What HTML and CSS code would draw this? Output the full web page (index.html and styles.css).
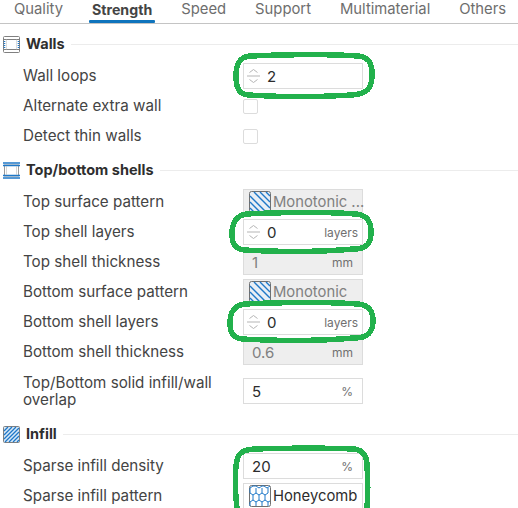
FILE: index.html
```html
<!DOCTYPE html>
<html lang="en">
<head>
<meta charset="utf-8">
<title>Strength settings</title>
<link rel="stylesheet" href="styles.css">
</head>
<body>
<div class="page">
  <nav class="tabs">
    <span class="tab">Quality</span>
    <span class="tab tab-active">Strength</span>
    <span class="tab">Speed</span>
    <span class="tab">Support</span>
    <span class="tab">Multimaterial</span>
    <span class="tab">Others</span>
  </nav>

  <section class="section">
    <header class="section-head">
      <svg class="section-icon" viewBox="0 0 17 17"><rect x="0.5" y="0.5" width="16" height="16" rx="1" fill="#fff" stroke="#808080"/><path d="M1 3.5H16M1 13.5H16" stroke="#808080"/><path d="M1.5 5v8M15.5 5v8" stroke="#1f78c8" stroke-width="1.6" stroke-dasharray="1 1"/><path d="M3.5 3.5v10M13.5 3.5v10" stroke="#c4c4c4" stroke-width="0.6"/></svg>
      <h2 class="section-title">Walls</h2>
      <span class="section-rule"></span>
    </header>
    <div class="row"><span class="label">Wall loops</span>
      <div class="field"><span class="spin"><svg viewBox="0 0 13 18"><path d="M2.5 5.5 6.5 2.5l4 3M0 9h13M2.5 12.5l4 3 4-3" fill="none" stroke="#b5b5b5"/></svg></span><span class="value">2</span></div></div>
    <div class="row"><span class="label">Alternate extra wall</span><span class="check"></span></div>
    <div class="row"><span class="label">Detect thin walls</span><span class="check"></span></div>
  </section>

  <section class="section">
    <header class="section-head">
      <svg class="section-icon" viewBox="0 0 17 17"><rect x="1.5" y="3" width="14" height="11" fill="#fff" stroke="#9a9a9a"/><path d="M0 1H17M0 3.5H17M0 13.5H17M0 16H17" stroke="#1f78c8" stroke-width="1.3"/><path d="M3.5 4v9M13.5 4v9" stroke="#c4c4c4" stroke-width="0.7"/></svg>
      <h2 class="section-title">Top/bottom shells</h2>
      <span class="section-rule"></span>
    </header>
    <div class="row"><span class="label">Top surface pattern</span>
      <div class="field field-off"><svg class="pattern" viewBox="0 0 22 22"><rect x="0.5" y="0.5" width="21" height="21" rx="2" fill="#e8eef5" stroke="#707070"/><path d="M1 5 17 21M1 11l10 10M1 17l4 4M5 1l16 16M11 1l10 10M17 1l4 4" stroke="#1f78c8" stroke-width="1.4"/></svg><span class="combo-text">Monotonic ...</span></div></div>
    <div class="row"><span class="label">Top shell layers</span>
      <div class="field"><span class="spin"><svg viewBox="0 0 13 18"><path d="M2.5 5.5 6.5 2.5l4 3M0 9h13M2.5 12.5l4 3 4-3" fill="none" stroke="#b5b5b5"/></svg></span><span class="value">0</span><span class="unit unit-wide">layers</span></div></div>
    <div class="row"><span class="label">Top shell thickness</span>
      <div class="field field-off"><span class="value value-plain">1</span><span class="unit">mm</span></div></div>
    <div class="row"><span class="label">Bottom surface pattern</span>
      <div class="field field-off"><svg class="pattern" viewBox="0 0 22 22"><rect x="0.5" y="0.5" width="21" height="21" rx="2" fill="#e8eef5" stroke="#707070"/><path d="M1 5 17 21M1 11l10 10M1 17l4 4M5 1l16 16M11 1l10 10M17 1l4 4" stroke="#1f78c8" stroke-width="1.4"/></svg><span class="combo-text">Monotonic</span></div></div>
    <div class="row"><span class="label">Bottom shell layers</span>
      <div class="field"><span class="spin"><svg viewBox="0 0 13 18"><path d="M2.5 5.5 6.5 2.5l4 3M0 9h13M2.5 12.5l4 3 4-3" fill="none" stroke="#b5b5b5"/></svg></span><span class="value">0</span><span class="unit unit-wide">layers</span></div></div>
    <div class="row"><span class="label">Bottom shell thickness</span>
      <div class="field field-off"><span class="value value-plain">0.6</span><span class="unit">mm</span></div></div>
    <div class="row row-tall"><span class="label">Top/Bottom solid infill/wall<br>overlap</span>
      <div class="field"><span class="value value-plain">5</span><span class="unit">%</span></div></div>
  </section>

  <section class="section">
    <header class="section-head">
      <svg class="section-icon" viewBox="0 0 17 17"><rect x="0.5" y="0.5" width="16" height="16" rx="1" fill="#d8e8f6" stroke="#808080"/><path d="M1 5 5 1M1 9 9 1M1 13 13 1M2 16 16 2M6 16 16 6M10 16l6-6M14 16l2-2" stroke="#1f78c8" stroke-width="1.3"/></svg>
      <h2 class="section-title">Infill</h2>
      <span class="section-rule"></span>
    </header>
    <div class="row"><span class="label">Sparse infill density</span>
      <div class="field"><span class="value value-plain">20</span><span class="unit">%</span></div></div>
    <div class="row"><span class="label">Sparse infill pattern</span>
      <div class="field"><svg class="pattern" viewBox="0 0 22 22"><rect x="0.5" y="0.5" width="21" height="21" rx="2" fill="#fff" stroke="#707070"/><path d="M1 3 4 1H7L10 3 13 1H15L18 3 21 1M1 3V8L4 10 7 8V3M7 8 10 10 13 8V3M13 8 16 10 19 8V3M4 10V15L1 17M4 15 7 17 10 15V10M10 15 13 17 16 15V10M16 15 19 17 21 16M1 17V21M7 17V21M13 17V21M19 17V21" fill="none" stroke="#1f78c8" stroke-width="1"/></svg><span class="combo-text combo-on">Honeycomb</span></div></div>
  </section>

  <svg class="marks" viewBox="0 0 518 508">
    <g fill="none" stroke="#22b14c" stroke-width="5.5">
      <path d="M250 56C300 54 330 54 358 56 368 57 372 62 372 74 372 88 368 94 352 95 320 97 280 97 248 95 239 94 236 88 236 76 236 63 240 57 250 56Z"/>
      <path d="M246 214C290 212 330 212 356 214 367 215 371 221 371 232 371 243 367 249 354 249 320 252 280 252 244 250 235 249 232 244 232 234 232 222 236 216 246 214Z"/>
      <path d="M244 304C290 302 330 302 358 304 369 305 373 311 373 321 373 332 368 338 354 338 320 341 280 341 242 339 233 338 230 333 230 323 230 312 234 306 244 304Z"/>
      <path d="M237 508C235 490 235 470 237 460 239 452 244 450 254 449 290 448 330 448 354 449 363 450 367 456 367 466 368 480 368 495 367 508"/>
    </g>
  </svg>
</div>
</body>
</html>
```

FILE: styles.css
```css
* { box-sizing: border-box; }
html, body { margin: 0; padding: 0; background: #fff; }
.page {
  position: relative;
  width: 518px;
  height: 508px;
  overflow: hidden;
  font-family: Inter, "Noto Sans", sans-serif;
  color: #3c3c3c;
}
.tabs {
  display: flex;
  gap: 29px;
  height: 24px;
  padding-left: 14px;
  padding-top: 1px;
  border-bottom: 1px solid #c4c4c4;
  font-size: 14.8px;
  line-height: 17px;
  color: #6e6e6e;
}
.tab { position: relative; white-space: nowrap; }
.tab-active { font-weight: 700; font-size: 14.2px; color: #444; }
.tab-active::after {
  content: "";
  position: absolute;
  left: -3px;
  right: -3px;
  top: 19px;
  height: 3px;
  border-radius: 1px;
  background: #0f74bd;
}
.section { padding-top: 8px; margin-bottom: -1px; }
.section-head {
  display: flex;
  align-items: center;
  height: 24px;
  margin-bottom: 5px;
  padding-left: 3px;
}
.section-icon { width: 17px; height: 17px; flex: none; }
.section-title {
  margin: 0 6px 2px 6px;
  font-size: 14.5px;
  font-weight: 700;
  color: #2e2e2e;
  white-space: nowrap;
}
.section-rule { flex: 1; height: 1px; background: #ececec; }
.row {
  display: flex;
  align-items: center;
  height: 30px;
}
.row-tall { height: 48px; }
.label {
  width: 243px;
  flex: none;
  padding-left: 23px;
  padding-bottom: 1px;
  font-size: 15.2px;
  line-height: 17px;
  color: #444;
}
.field {
  display: flex;
  align-items: center;
  width: 120px;
  height: 26px;
  padding: 0 2px;
  border: 1px solid #dcdcdc;
  background: #fff;
  font-size: 15px;
  color: #2c2c2c;
}
.field-off { background: #eee; color: #808080; }
.spin { width: 13px; height: 18px; margin-left: 1px; flex: none; }
.spin svg { display: block; width: 13px; height: 18px; }
.value { margin-left: 7px; }
.value-plain { margin-left: 6px; }
.unit { margin-left: auto; padding-right: 7px; font-size: 12px; color: #707070; }
.unit-wide { padding-right: 2px; }
.check {
  width: 15px;
  height: 15px;
  border: 1px solid #dcdcdc;
  border-radius: 2px;
  background: #fff;
}
.pattern { width: 22px; height: 22px; margin-left: 3px; flex: none; }
.combo-text { margin-left: 2px; white-space: nowrap; font-size: 14.8px; }
.combo-on { color: #2c2c2c; }
.marks {
  position: absolute;
  left: 0;
  top: 0;
  width: 518px;
  height: 508px;
  pointer-events: none;
  shape-rendering: crispEdges;
}
```
